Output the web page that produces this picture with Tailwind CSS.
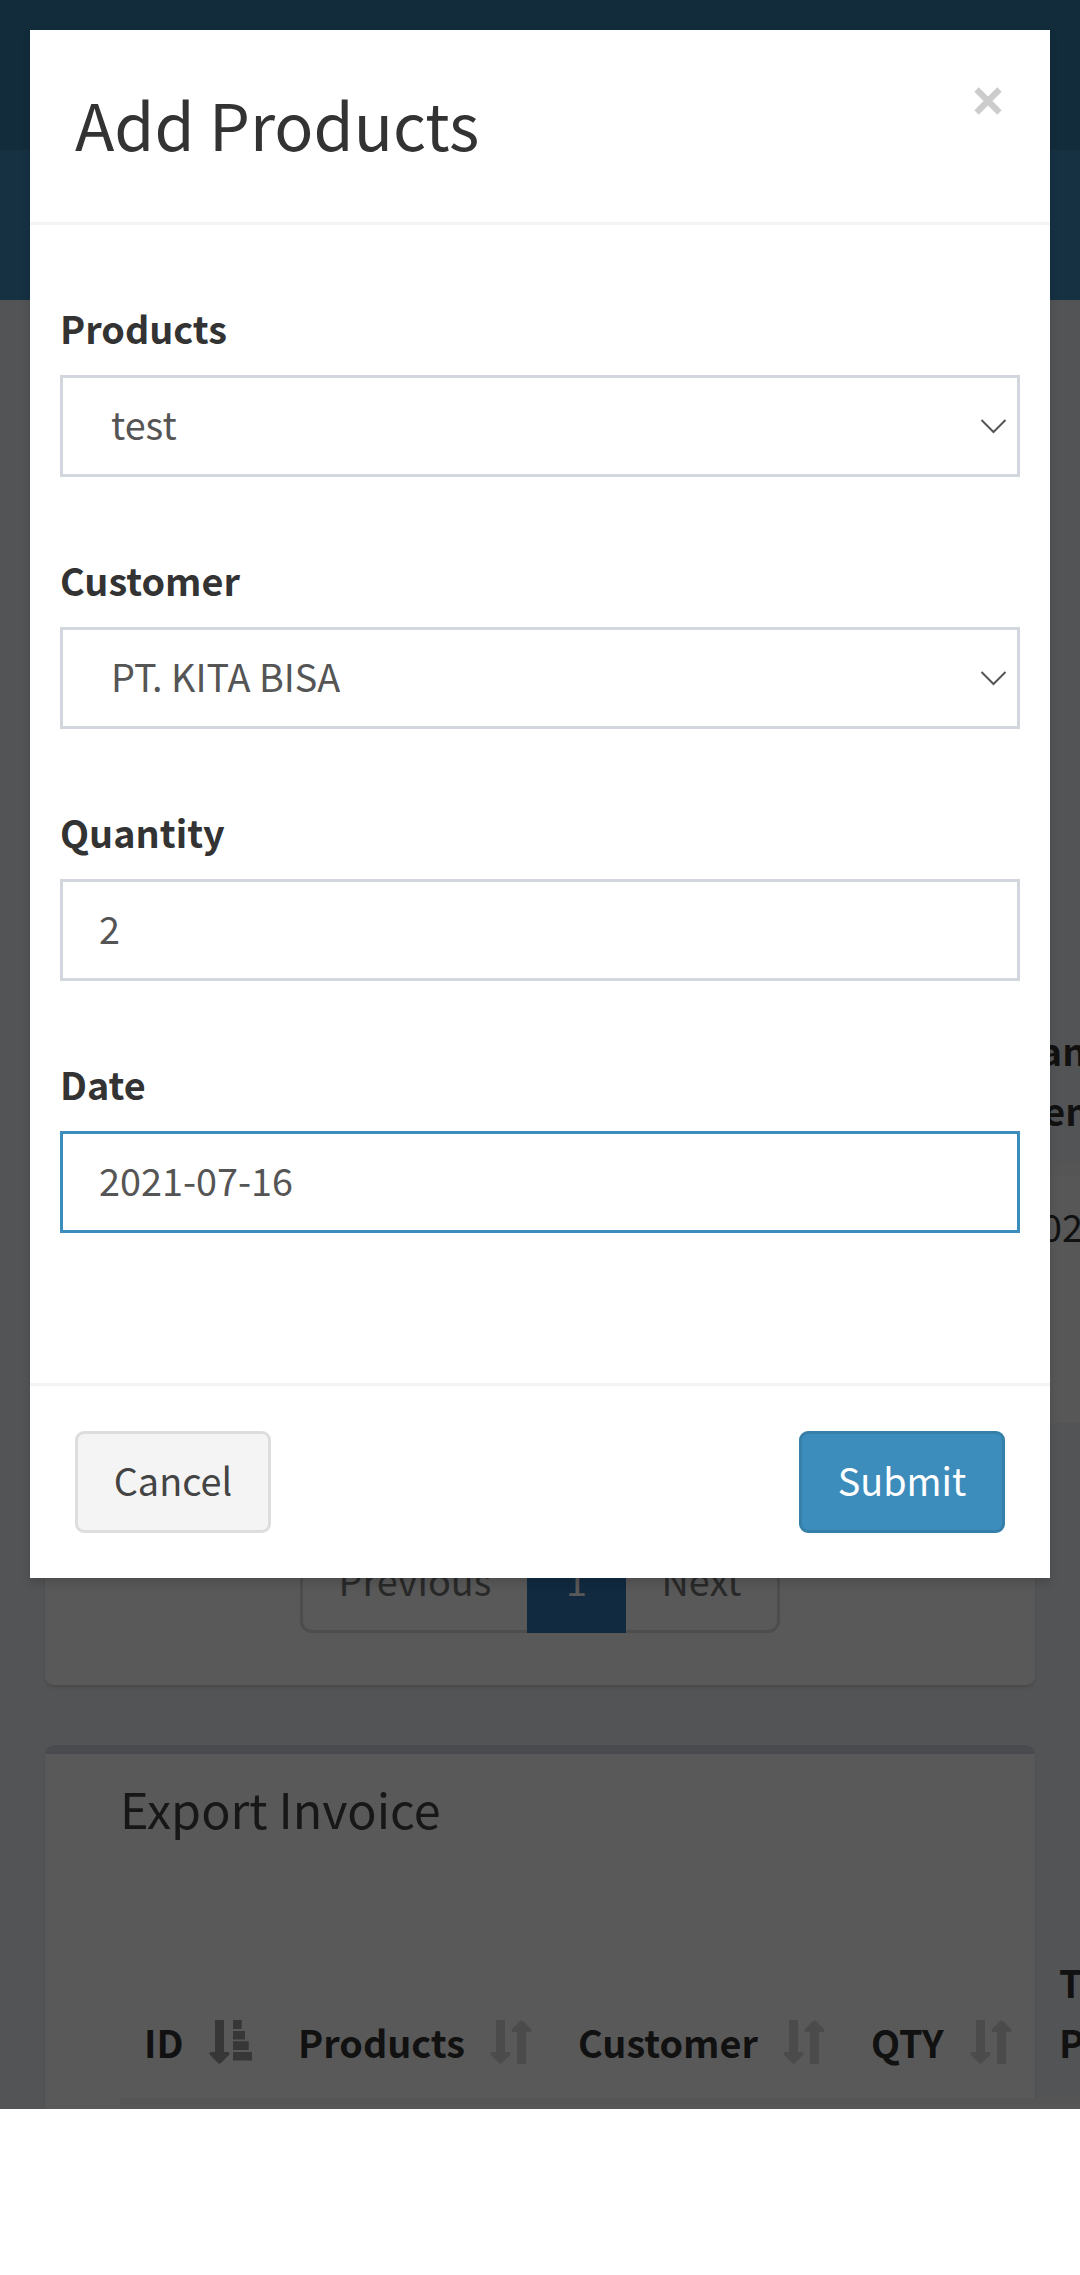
<!DOCTYPE html>
<html lang="en">
<head>
<meta charset="utf-8">
<title>Add Products</title>
<script src="https://cdn.jsdelivr.net/npm/@tailwindcss/browser@4"></script>
</head>
<body class="bg-white font-['Noto_Sans_CJK_SC','Source_Sans_Pro',sans-serif] text-[37.8px] leading-[60px] text-[#333]">
<svg class="hidden">
  <symbol id="sort" viewBox="0 0 42 44"><path d="M6 0h9v32h4.500q2 1 .5 3l-8 8q-1.500 1.500-3 0l-8-8q-1.500-2 .5-3H6zM27 44h9V12h4.500q2-1 .5-3l-8-8q-1.500-1.500-3 0l-8 8q-1.500 2 .5 3H27z"/></symbol>
  <symbol id="sort-asc" viewBox="0 0 44 44"><path d="M6 0h9v32h4.500q2 1 .5 3l-8 8q-1.500 1.500-3 0l-8-8q-1.500-2 .5-3H6zM24 0h8.700v9H24zM24 11h12v8.500H24zM24 21.300h15.700v8.700H24zM24 32h19v8.500H24z"/></symbol>
</svg>

<div class="relative h-[2109px] w-[1080px] overflow-hidden bg-[#ecf0f5]">
  <!-- page behind the dialog -->
  <div class="h-[150px] bg-[#367fa9]"></div>
  <div class="h-[150px] bg-[#3c8dbc]"></div>
  <main class="px-[45px] pt-[45px]">
    <section class="flex h-[1340px] flex-col rounded-[9px] bg-white pt-[674px] shadow-[0_3px_3px_rgba(0,0,0,0.1)]">
      <div class="ml-[75px] w-[1100px]">
        <div class="flex h-[156px] justify-start border-b-12 border-[#f4f4f4] bg-[#ecf0f5] pt-px pl-[899px] font-bold"><div>Tanggal<br>Pembelian</div></div>
        <div class="h-[248px] bg-[#f9f9f9] pt-[21px] pl-[900px]">2021-07-16</div>
      </div>
      <div class="mt-[108px] ml-[255px] flex h-[102px] w-[480px] text-[#777]">
        <div class="flex w-[227px] items-center justify-center rounded-l-[12px] border-3 border-r-0 border-[#ddd] pb-[5px]">Previous</div>
        <div class="flex w-[99px] items-center justify-center bg-[#337ab7] pb-[5px] text-white">1</div>
        <div class="flex w-[154px] items-center justify-center rounded-r-[12px] border-3 border-l-0 border-[#ddd] pb-[5px]">Next</div>
      </div>
    </section>
    <section class="mt-[60px] h-[500px] rounded-[9px] border-t-9 border-[#d2d6de] bg-white pt-[14px] pl-[75px] shadow-[0_3px_3px_rgba(0,0,0,0.1)]">
      <h3 class="h-[183px] text-[48.5px] leading-[80px] text-[#444]">Export Invoice</h3>
      <div class="w-[1100px]">
        <div class="flex h-[153px] items-end border-b-6 border-[#f4f4f4] pb-[26px] font-bold">
          <div class="flex w-[154px] shrink-0 justify-between pr-[21px] pl-6">ID<svg class="mt-[8px] h-11 w-11 fill-[#9d9d9d]"><use href="#sort-asc"/></svg></div>
          <div class="flex w-[280px] shrink-0 justify-between pr-[22px] pl-6">Products<svg class="mt-[8px] h-11 w-[42px] fill-[#d6d6d6]"><use href="#sort"/></svg></div>
          <div class="flex w-[293px] shrink-0 justify-between pr-[22px] pl-6">Customer<svg class="mt-[8px] h-11 w-[42px] fill-[#d6d6d6]"><use href="#sort"/></svg></div>
          <div class="flex w-[187px] shrink-0 justify-between pr-[22px] pl-6">QTY<svg class="mt-[8px] h-11 w-[42px] fill-[#d6d6d6]"><use href="#sort"/></svg></div>
          <div class="pl-[25px]">Tanggal<br>Pembelian</div>
        </div>
        <div class="h-[100px] bg-[#f9f9f9]"></div>
      </div>
    </section>
  </main>
  <div class="absolute inset-0 bg-black/65"></div>

  <!-- dialog -->
  <div class="absolute top-[30px] left-[30px] flex h-[1548px] w-[1020px] flex-col bg-white shadow-[0_6px_9px_rgba(0,0,0,0.125)]">
    <div class="flex h-[195px] justify-between border-b-3 border-[#f4f4f4] pt-[43px] pr-[48px] pl-[45px]">
      <h2 class="text-[64.700px] leading-[100px]">Add Products</h2>
      <svg class="mt-[14px] h-[28px] w-[28px]" viewBox="0 0 28 28" stroke="#ccc" stroke-width="6.200"><path d="M2.500 2.500 25.500 25.500M25.500 2.500 2.500 25.500"/></svg>
    </div>
    <div class="flex grow flex-col gap-[72px] px-[30px] pt-[73px]">
      <div class="flex flex-col gap-[17px]">
        <div class="font-bold">Products</div>
        <div class="flex h-[102px] items-center justify-between border-3 border-[#d2d6de] pr-[10px] pb-[5px] pl-12 text-[#555]">test<svg class="mt-[5px] h-[16px] w-[28px]" viewBox="0 0 28 16" fill="none" stroke="#555" stroke-width="2"><path d="M2.500 2 14.500 14 26.500 2"/></svg></div>
      </div>
      <div class="mt-px flex flex-col gap-[17px]">
        <div class="font-bold">Customer</div>
        <div class="flex h-[102px] items-center justify-between border-3 border-[#d2d6de] pr-[10px] pb-[5px] pl-12 text-[#555]">PT. KITA BISA<svg class="mt-[5px] h-[16px] w-[28px]" viewBox="0 0 28 16" fill="none" stroke="#555" stroke-width="2"><path d="M2.500 2 14.500 14 26.500 2"/></svg></div>
      </div>
      <div class="mt-px flex flex-col gap-[17px]">
        <div class="font-bold">Quantity</div>
        <div class="flex h-[102px] items-center border-3 border-[#d2d6de] pb-[5px] pl-9 text-[#555]">2</div>
      </div>
      <div class="mt-px flex flex-col gap-[17px]">
        <div class="font-bold">Date</div>
        <div class="flex h-[102px] items-center border-3 border-[#3c8dbc] pb-[5px] pl-9 text-[#555]">2021-07-16</div>
      </div>
    </div>
    <div class="flex h-[195px] items-start justify-between border-t-3 border-[#f4f4f4] px-[45px] pt-[45px]">
      <button class="flex h-[102px] w-[196px] items-center justify-center rounded-[9px] border-3 border-[#ddd] bg-[#f4f4f4] pb-[5px] text-[#444]">Cancel</button>
      <button class="flex h-[102px] w-[206px] items-center justify-center rounded-[9px] border-3 border-[#367fa9] bg-[#3c8dbc] pb-[5px] text-white">Submit</button>
    </div>
  </div>
</div>
</body>
</html>
